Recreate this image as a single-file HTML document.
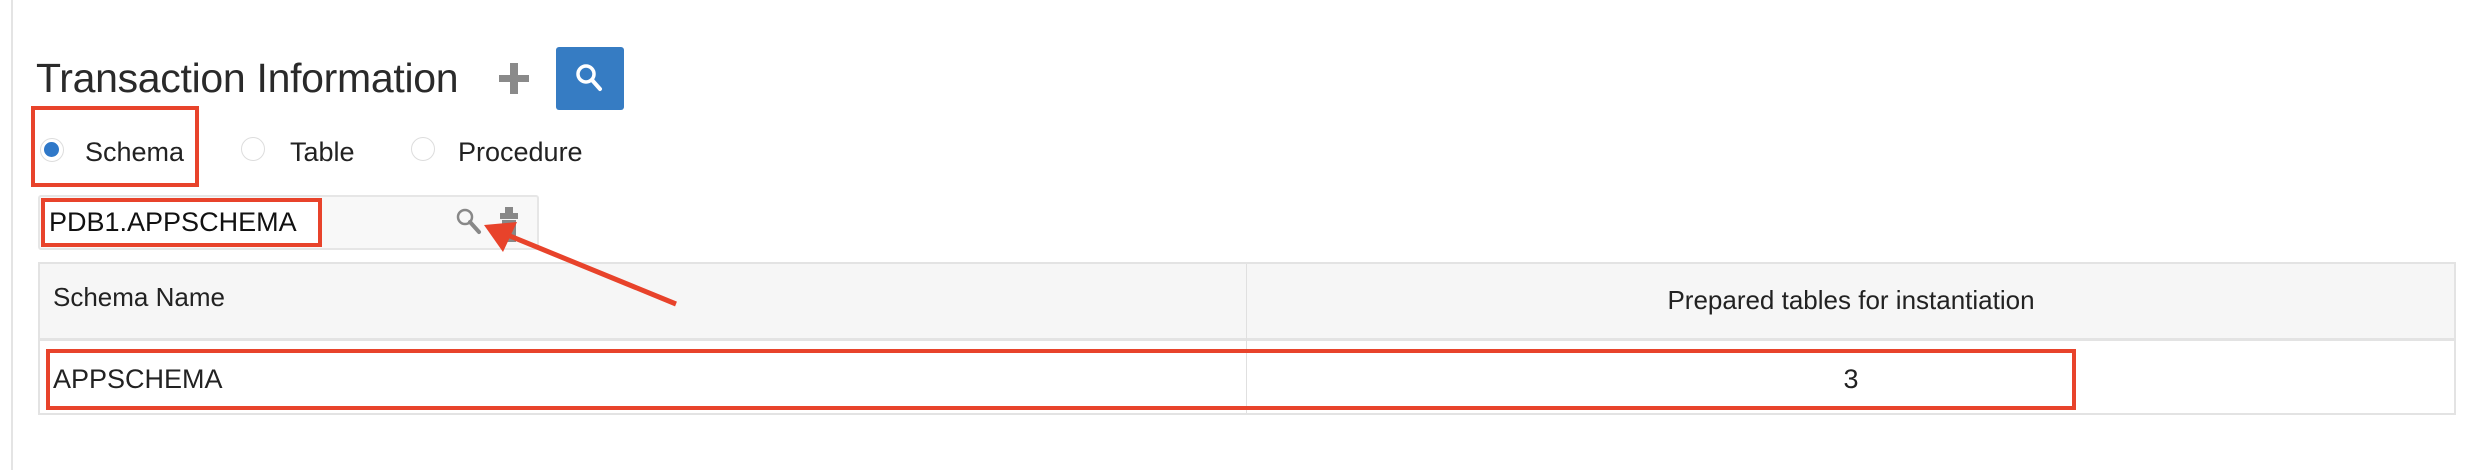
<!DOCTYPE html>
<html><head><meta charset="utf-8"><style>
html,body{margin:0;padding:0;width:2470px;height:470px;background:#fff;overflow:hidden;font-family:"Liberation Sans",sans-serif;color:#222}
.a{position:absolute}
.vl{left:11px;top:0;width:2px;height:470px;background:#e4e4e4}
.title{left:36px;top:55px;font-size:41px;color:#2a2a2a;letter-spacing:-0.3px}
.radio{width:22px;height:22px;border:1px solid #ddd;border-radius:50%;background:#fff}
.lbl{font-size:27px;color:#222}
.red{border:4px solid #e8432b;box-sizing:border-box}
</style></head><body>
<div class="a vl"></div>
<div class="a title">Transaction Information</div>
<div class="a" style="left:499px;top:75px;width:30px;height:7px;background:#8a8a8a"></div>
<div class="a" style="left:510px;top:63px;width:8px;height:31px;background:#8a8a8a"></div>
<div class="a" style="left:556px;top:47px;width:68px;height:63px;background:#367cc3;border-radius:3px"></div>
<svg class="a" style="left:572px;top:60px" width="36" height="36" viewBox="0 0 36 36"><circle cx="14" cy="14" r="8" fill="none" stroke="#fff" stroke-width="3.5"/><line x1="20" y1="20" x2="28" y2="29" stroke="#fff" stroke-width="4" stroke-linecap="round"/></svg>
<div class="a red" style="left:31px;top:106px;width:168px;height:81px"></div>
<div class="a radio" style="left:40px;top:138px"></div>
<div class="a" style="left:44px;top:142px;width:15px;height:15px;border-radius:50%;background:#2f78c8"></div>
<div class="a lbl" style="left:85px;top:137px">Schema</div>
<div class="a radio" style="left:241px;top:137px"></div>
<div class="a lbl" style="left:290px;top:137px">Table</div>
<div class="a radio" style="left:411px;top:137px"></div>
<div class="a lbl" style="left:458px;top:137px">Procedure</div>
<div class="a" style="left:38px;top:195px;width:501px;height:55px;background:#f8f8f8;border:2px solid #e6e6e6;box-sizing:border-box;border-radius:3px"></div>
<div class="a red" style="left:41px;top:198px;width:281px;height:49px;background:#fff"></div>
<div class="a" style="left:49px;top:207px;font-size:27px;color:#111">PDB1.APPSCHEMA</div>
<svg class="a" style="left:452px;top:205px" width="36" height="36" viewBox="0 0 36 36"><circle cx="13" cy="12" r="7" fill="none" stroke="#888" stroke-width="2.5"/><line x1="18" y1="17" x2="27" y2="27" stroke="#888" stroke-width="4" stroke-linecap="round"/></svg>
<svg class="a" style="left:498px;top:205px" width="24" height="40" viewBox="0 0 24 40"><rect x="7" y="2" width="8" height="6" fill="#888"/><rect x="2" y="8" width="18" height="6" fill="#888"/><rect x="4" y="15" width="14" height="22" fill="#888"/></svg>
<div class="a" style="left:38px;top:262px;width:2418px;height:153px;border:2px solid #e3e3e3;box-sizing:border-box"></div>
<div class="a" style="left:40px;top:264px;width:2414px;height:74px;background:#f6f6f6;border-bottom:3px solid #e3e3e3"></div>
<div class="a" style="left:1246px;top:264px;width:1px;height:149px;background:#e0e0e0"></div>
<div class="a lbl" style="left:53px;top:282px;font-size:26px">Schema Name</div>
<div class="a lbl" style="left:1247px;width:1208px;text-align:center;top:285px;font-size:26px">Prepared tables for instantiation</div>
<div class="a red" style="left:46px;top:349px;width:2030px;height:61px"></div>
<div class="a lbl" style="left:53px;top:364px;font-size:27px">APPSCHEMA</div>
<div class="a lbl" style="left:1247px;width:1208px;text-align:center;top:364px;font-size:27px">3</div>
<svg class="a" style="left:0;top:0" width="700" height="330"><line x1="676" y1="304" x2="505" y2="234" stroke="#e8432b" stroke-width="5"/><polygon points="484,225 517,222 503,252" fill="#e8432b"/></svg>
</body></html>
